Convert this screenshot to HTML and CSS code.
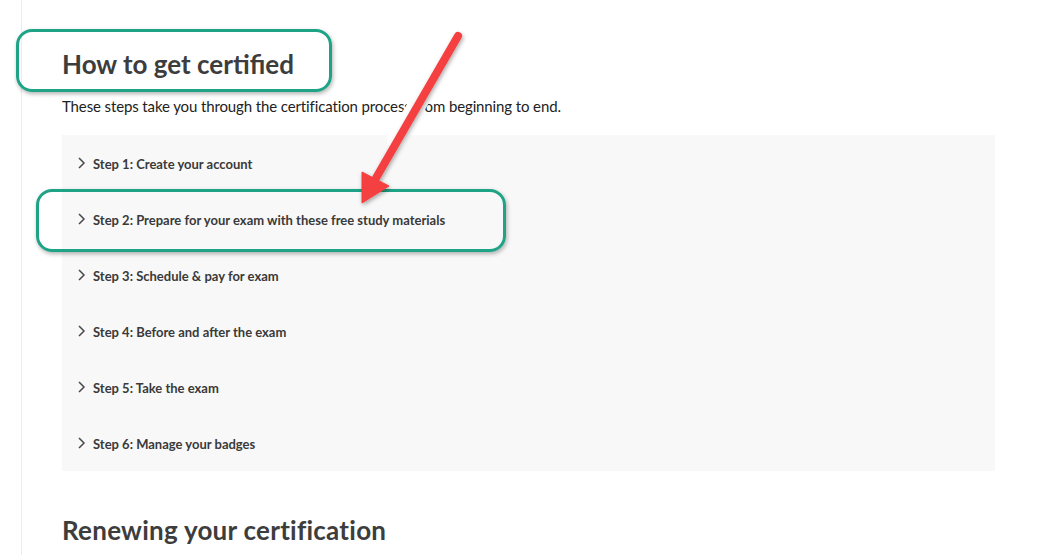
FILE: index.html
```html
<!DOCTYPE html>
<html lang="en">
<head>
<meta charset="utf-8">
<title>How to get certified</title>
<link rel="stylesheet" href="styles.css">
</head>
<body>
<div class="page">
  <main class="content">
    <h2 class="title">How to get certified</h2>
    <p class="lead">These steps take you through the certification process from beginning to end.</p>
    <ul class="accordion">
      <li class="item"><svg class="chev" width="16" height="12" viewBox="0 0 16 12"><polyline points="2,1 7,6 2,11"/></svg>Step 1: Create your account</li>
      <li class="item"><svg class="chev" width="16" height="12" viewBox="0 0 16 12"><polyline points="2,1 7,6 2,11"/></svg>Step 2: Prepare for your exam with these free study materials</li>
      <li class="item"><svg class="chev" width="16" height="12" viewBox="0 0 16 12"><polyline points="2,1 7,6 2,11"/></svg>Step 3: Schedule &amp; pay for exam</li>
      <li class="item"><svg class="chev" width="16" height="12" viewBox="0 0 16 12"><polyline points="2,1 7,6 2,11"/></svg>Step 4: Before and after the exam</li>
      <li class="item"><svg class="chev" width="16" height="12" viewBox="0 0 16 12"><polyline points="2,1 7,6 2,11"/></svg>Step 5: Take the exam</li>
      <li class="item"><svg class="chev" width="16" height="12" viewBox="0 0 16 12"><polyline points="2,1 7,6 2,11"/></svg>Step 6: Manage your badges</li>
    </ul>
    <h2 class="title second">Renewing your certification</h2>
  </main>
  <div class="mark mark-title"></div>
  <div class="mark mark-step"></div>
  <svg class="arrow" width="1052" height="555" viewBox="0 0 1052 555">
    <defs>
      <filter id="sh" x="-20%" y="-20%" width="140%" height="140%">
        <feDropShadow dx="1" dy="2" stdDeviation="2" flood-color="#000" flood-opacity="0.35"/>
      </filter>
    </defs>
    <line x1="455" y1="42" x2="396" y2="140" stroke="#ffffff" stroke-width="18" stroke-linecap="round"/>
    <g filter="url(#sh)" fill="#f43f3f" stroke="#f43f3f">
      <line x1="458" y1="36" x2="376" y2="178" stroke-width="8" stroke-linecap="round"/>
      <polygon points="362,203 362,172 389,186" stroke-width="1" stroke-linejoin="round"/>
    </g>
  </svg>
</div>
</body>
</html>
```
FILE: styles.css
```css
html, body {
  margin: 0;
  padding: 0;
  background: #ffffff;
}
.page {
  position: relative;
  width: 1052px;
  height: 555px;
  overflow: hidden;
  font-family: Lato, "Open Sans", sans-serif;
  color: #2c2c2c;
}
.content {
  margin-left: 21px;
  border-left: 1px solid #ececec;
  min-height: 555px;
  padding: 45px 0 0 40px;
  box-sizing: border-box;
}
.title {
  margin: 0;
  font-size: 26px;
  font-weight: 700;
  line-height: 38px;
  color: #3d3d3d;
}
.lead {
  margin: 13px 0 0;
  font-size: 15px;
  line-height: 20px;
  letter-spacing: -0.12px;
  color: #222;
}
.accordion {
  list-style: none;
  margin: 19px 0 0;
  padding: 0;
  width: 933px;
  background: #f8f8f8;
}
.item {
  height: 56px;
  display: flex;
  align-items: center;
  padding: 2px 0 0 15px;
  box-sizing: border-box;
  font-size: 13px;
  font-weight: 700;
  color: #3a3a3a;
}
.chev {
  flex: none;
  margin-top: -2px;
}
.chev polyline {
  fill: none;
  stroke: #4a4a4a;
  stroke-width: 1.5;
}
.second {
  margin-top: 40px;
  letter-spacing: 0.25px;
}
.mark {
  position: absolute;
  border: 3px solid #1ea386;
  border-radius: 16px;
  box-shadow: 1px 2px 4px rgba(0, 0, 0, 0.3);
  box-sizing: border-box;
}
.mark-title {
  left: 16px;
  top: 29px;
  width: 316px;
  height: 63px;
}
.mark-step {
  left: 36px;
  top: 189px;
  width: 470px;
  height: 63px;
}
.arrow {
  position: absolute;
  left: 0;
  top: 0;
}
```
